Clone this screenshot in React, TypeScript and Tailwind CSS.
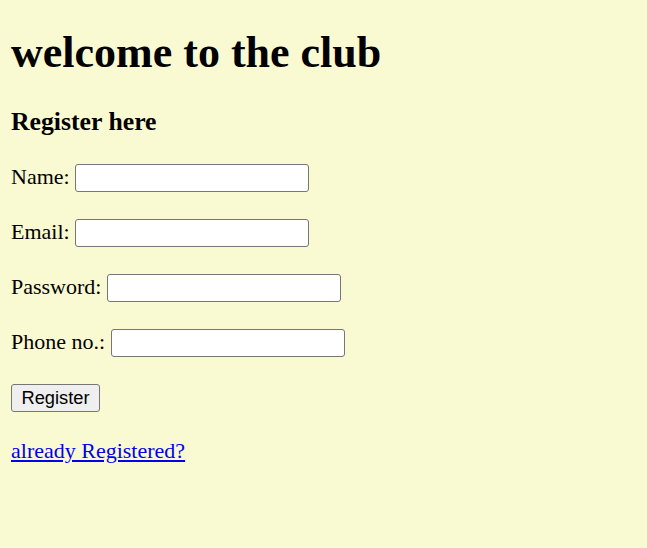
import React from "react";

const inputCls =
  "inline-block align-baseline w-[234px] h-[28px] bg-white border border-[#767676] rounded-[3px] px-[3px] text-[18.3px] leading-[normal] outline-none";

export default function App() {
  return (
    <div
      className="min-h-[548px] bg-[#fafad2] px-[11px] pt-[26.5px] pb-[11px] text-black text-[22px] leading-[normal]"
      style={{ fontFamily: '"Liberation Serif", "Times New Roman", serif' }}
    >
      <h1 className="text-[44px] font-bold mt-0 mb-[29.5px] leading-[normal]">welcome to the club</h1>
      <h3 className="text-[25.74px] font-bold my-[25.74px] leading-[normal]">Register here</h3>
      <form onSubmit={(e) => e.preventDefault()}>
        <p className="my-[26.5px]">
          Name: <input type="text" className={inputCls} />
        </p>
        <p className="my-[26.5px]">
          Email: <input type="email" className={inputCls} />
        </p>
        <p className="my-[26.5px]">
          Password: <input type="password" className={inputCls} />
        </p>
        <p className="my-[26.5px]">
          Phone no.: <input type="text" className={inputCls} />
        </p>
        <p className="my-[26.5px]">
          <button
            type="submit"
            className="inline-block align-baseline w-[89px] h-[28px] bg-[#efefef] border border-[#767676] rounded-[3px] text-[18.3px] text-black leading-[normal]"
            style={{ fontFamily: '"Liberation Sans", Arial, sans-serif' }}
          >
            Register
          </button>
        </p>
      </form>
      <p className="my-[26.5px]">
        <a href="#" className="text-[#0000ee] underline">
          already Registered?
        </a>
      </p>
    </div>
  );
}
